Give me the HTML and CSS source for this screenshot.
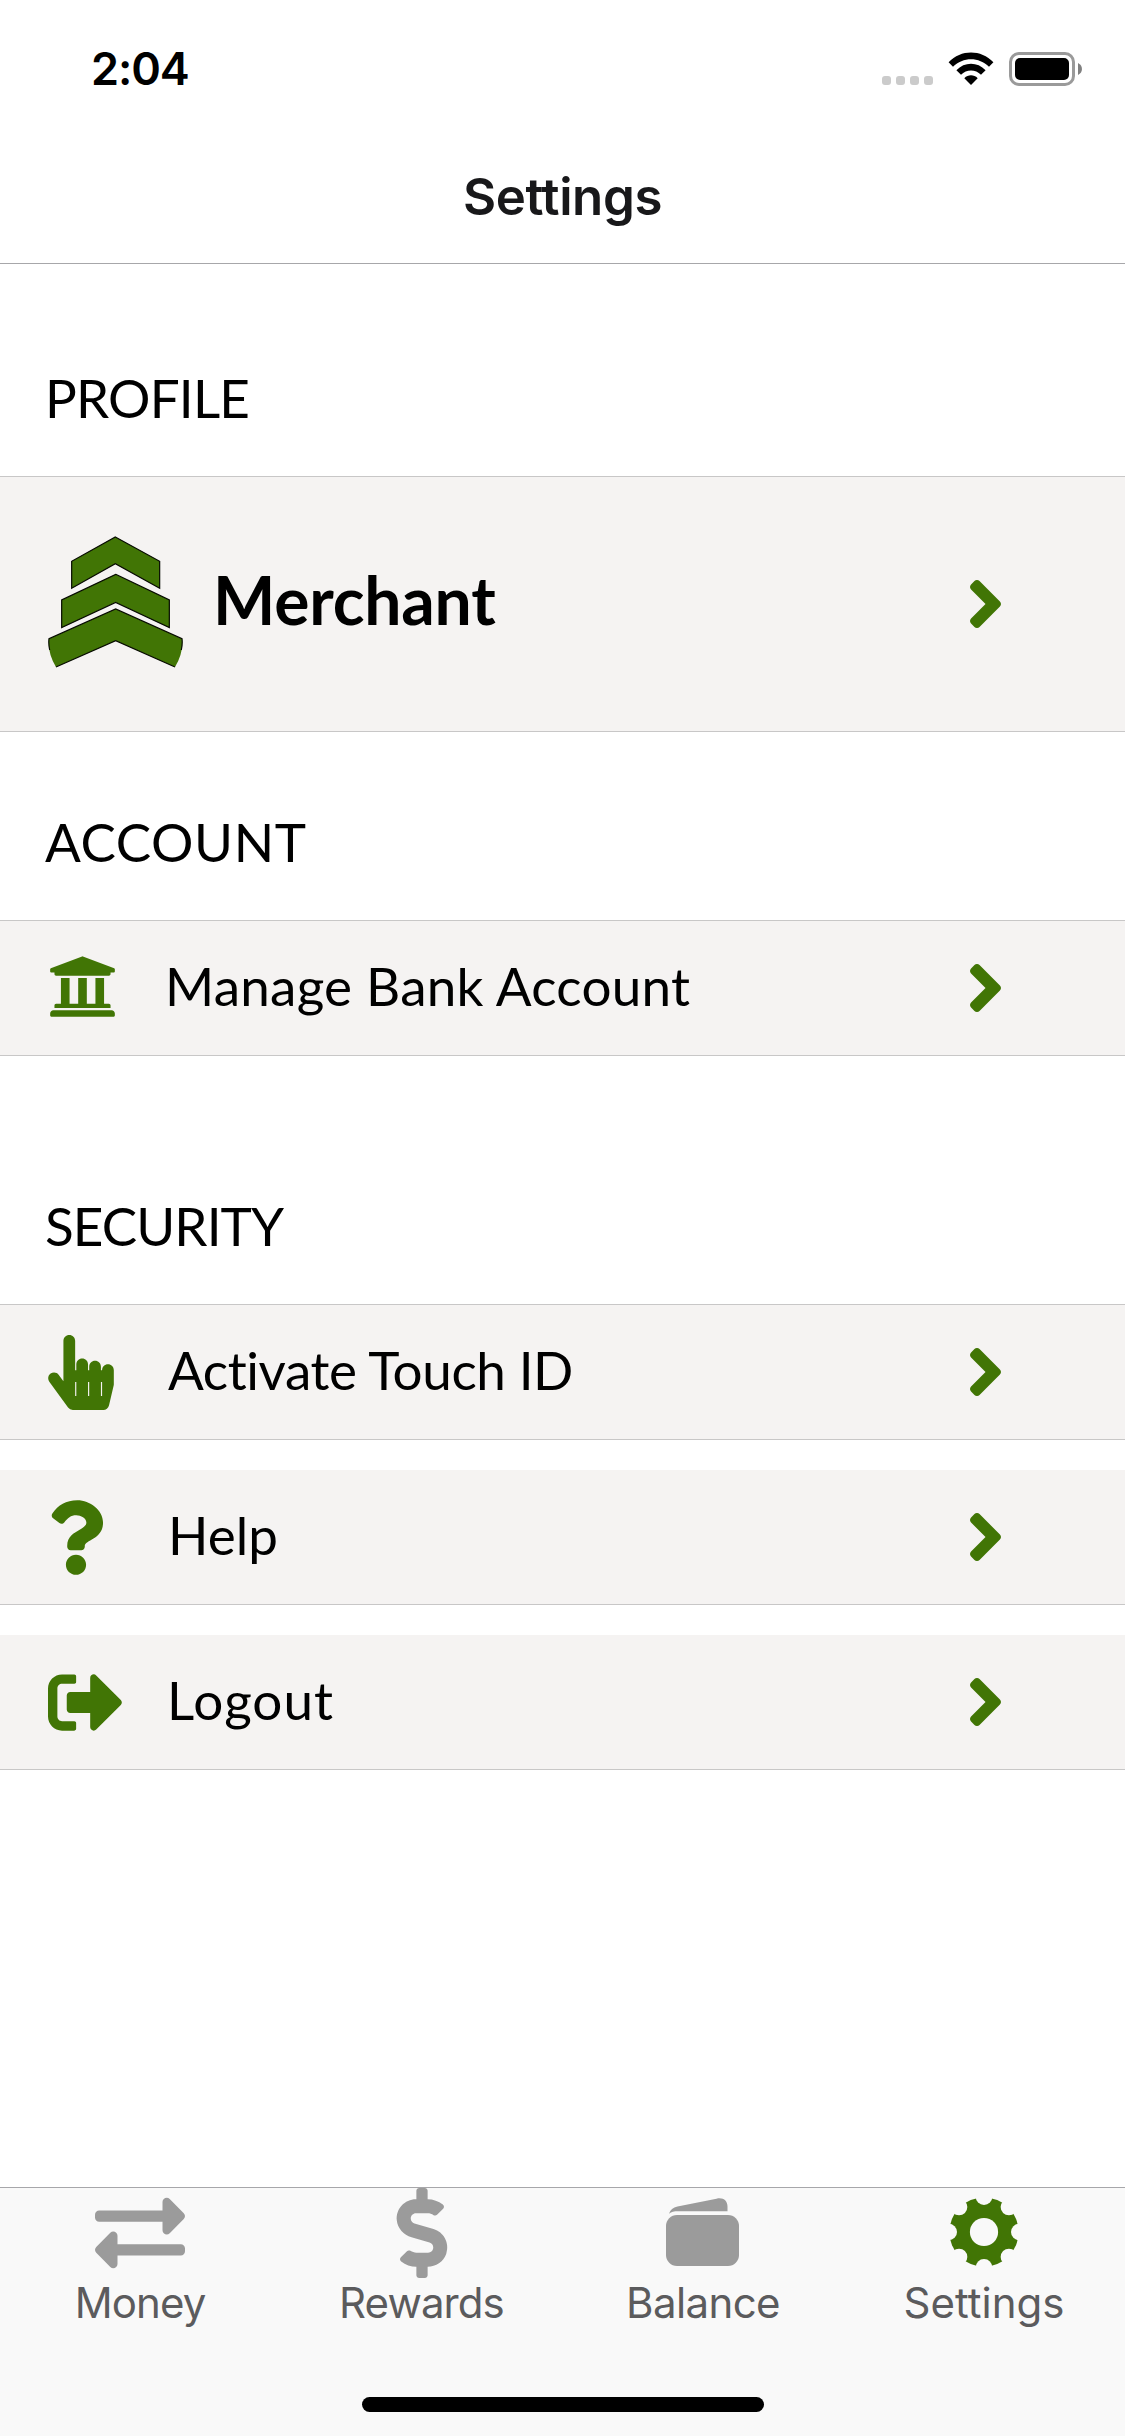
FILE: index.html
```html
<!DOCTYPE html>
<html lang="en">
<head>
<meta charset="utf-8">
<title>Settings</title>
<link rel="stylesheet" href="styles.css">
</head>
<body>
<svg class="defs" width="0" height="0" aria-hidden="true">
  <symbol id="chevron" viewBox="24.7 96 206.7 320"><path d="M224.3 273l-136 136c-9.4 9.400-24.600 9.400-33.900 0l-22.600-22.600c-9.400-9.400-9.400-24.600 0-33.900l96.400-96.400-96.400-96.400c-9.400-9.400-9.400-24.600 0-33.900L54.300 103c9.400-9.400 24.600-9.400 33.900 0l136 136c9.500 9.400 9.500 24.600.1 34z"/></symbol>
</svg>
<div class="screen">
  <header class="status">
    <span class="time">2:04</span>
    <div class="indicators">
      <div class="signal"><i></i><i></i><i></i><i></i></div>
      <svg class="wifi" viewBox="0 0 46 33">
        <path d="M0.600 10.200C13-2.800 33-2.800 45.400 10.200L41 14.800C31 4.700 15 4.700 5 14.800Z"/>
        <path d="M8.400 18.200C16.500 9.600 29.500 9.600 37.600 18.200L33 22.800C27.500 17 18.500 17 13 22.800Z"/>
        <path d="M16.300 26.200C20.200 22.400 25.800 22.400 29.700 26.200L23 33Z"/>
      </svg>
      <div class="battery"><div class="cell"><div class="charge"></div></div><svg class="nub" viewBox="0 0 4 12"><path d="M0 0C5.300 2.500 5.300 9.500 0 12Z"/></svg></div>
    </div>
  </header>
  <div class="navbar"><h1 class="title">Settings</h1></div>

  <main class="content">
    <section class="section profile">
      <h2 class="heading heading-profile">PROFILE</h2>
      <div class="row row-large">
        <svg class="logo" viewBox="54 42 405 405">
          <path d="M256 51L389 124V205L256 131L125 205V124Z"/>
          <path d="M257 163L418 240V323L257 247L95 323V240Z"/>
          <path class="base" d="M257 267L456 356Q461 398 435 441L257 362L78 441Q52 398 57 356Z"/>
          <path class="edge" d="M59 390Q55 370 57 356L257 267L456 356Q458 370 454 390M78 441L257 362L435 441"/>
        </svg>
        <span class="label merchant">Merchant</span>
        <svg class="chevron"><use href="#chevron"/></svg>
      </div>
    </section>

    <section class="section account">
      <h2 class="heading heading-account">ACCOUNT</h2>
      <div class="row">
        <svg class="icon bank" viewBox="0 0 512 512"><path d="M496 128v16a8 8 0 0 1-8 8h-24v12c0 6.627-5.373 12-12 12H60c-6.627 0-12-5.373-12-12v-12H24a8 8 0 0 1-8-8v-16a8 8 0 0 1 4.941-7.392l232-88a7.996 7.996 0 0 1 6.118 0l232 88A8 8 0 0 1 496 128zm-24 304H40c-13.255 0-24 10.745-24 24v16a8 8 0 0 0 8 8h464a8 8 0 0 0 8-8v-16c0-13.255-10.745-24-24-24zM96 192v192H60c-6.627 0-12 5.373-12 12v20h416v-20c0-6.627-5.373-12-12-12h-36V192h-64v192h-64V192h-64v192h-64V192H96z"/></svg>
        <span class="label manage">Manage Bank Account</span>
        <svg class="chevron"><use href="#chevron"/></svg>
      </div>
    </section>

    <section class="section security">
      <h2 class="heading heading-security">SECURITY</h2>
      <div class="rows">
        <div class="row">
          <svg class="icon hand" viewBox="0 0 448 512"><path d="M448 240v96c0 3.084-.356 6.159-1.063 9.162l-32 136C410.686 499.230 394.562 512 376 512H168a40.004 40.004 0 0 1-32.350-16.473l-127.997-176c-12.993-17.866-9.043-42.883 8.822-55.876 17.867-12.994 42.884-9.043 55.877 8.823L104 315.992V40c0-22.091 17.908-40 40-40s40 17.909 40 40v200h8v-40c0-22.091 17.908-40 40-40s40 17.909 40 40v40h8v-24c0-22.091 17.908-40 40-40s40 17.909 40 40v24h8c0-22.091 17.908-40 40-40s40 17.909 40 40zm-256 80h-8v96h8v-96zm88 0h-8v96h8v-96zm88 0h-8v96h8v-96z"/></svg>
          <span class="label touch">Activate Touch ID</span>
          <svg class="chevron"><use href="#chevron"/></svg>
        </div>
        <div class="row row-open">
          <svg class="icon question" viewBox="0 0 384 512"><path d="M202.021 0C122.202 0 70.503 32.703 29.914 91.026c-7.363 10.580-5.093 25.086 5.178 32.874l43.138 32.709c10.373 7.865 25.132 6.026 33.253-4.148 25.049-31.381 43.630-49.449 82.757-49.449 30.764 0 68.816 19.799 68.816 49.631 0 22.552-18.617 34.134-48.993 51.164-35.423 19.860-82.299 44.576-82.299 106.405V320c0 13.255 10.745 24 24 24h72.471c13.255 0 24-10.745 24-24v-5.773c0-42.860 125.268-44.645 125.268-160.627C377.504 66.256 286.902 0 202.021 0zM192 373.459c-38.196 0-69.271 31.075-69.271 69.271 0 38.195 31.075 69.270 69.271 69.270s69.271-31.075 69.271-69.271-31.075-69.270-69.271-69.270z"/></svg>
          <span class="label help">Help</span>
          <svg class="chevron"><use href="#chevron"/></svg>
        </div>
        <div class="row row-open">
          <svg class="icon exit" viewBox="0 0 512 512"><path d="M497 273L329 441c-15 15-41 4.500-41-17v-96H152c-13.300 0-24-10.700-24-24v-96c0-13.300 10.700-24 24-24h136V88c0-21.400 25.900-32 41-17l168 168c9.300 9.400 9.300 24.600 0 34zM192 436v-40c0-6.600-5.400-12-12-12H96c-17.700 0-32-14.300-32-32V160c0-17.700 14.300-32 32-32h84c6.600 0 12-5.400 12-12V76c0-6.600-5.400-12-12-12H96c-53 0-96 43-96 96v192c0 53 43 96 96 96h84c6.600 0 12-5.400 12-12z"/></svg>
          <span class="label logout">Logout</span>
          <svg class="chevron"><use href="#chevron"/></svg>
        </div>
      </div>
    </section>
  </main>

  <footer class="dock">
    <nav class="tabs">
      <div class="tab">
        <svg class="tab-icon" viewBox="0 0 512 512"><path d="M0 168v-16c0-13.255 10.745-24 24-24h360V80c0-21.367 25.899-32.042 40.971-16.971l80 80c9.372 9.373 9.372 24.569 0 33.941l-80 80C409.956 271.982 384 261.456 384 240v-48H24c-13.255 0-24-10.745-24-24zm488 152H128v-48c0-21.314-25.862-32.080-40.971-16.971l-80 80c-9.372 9.373-9.372 24.569 0 33.941l80 80C102.057 463.997 128 453.437 128 432v-48h360c13.255 0 24-10.745 24-24v-16c0-13.255-10.745-24-24-24z"/></svg>
        <span class="tab-label tight">Money</span>
      </div>
      <div class="tab">
        <svg class="tab-icon" viewBox="-112 0 512 512"><path d="M209.200 233.400l-108-31.600C88.700 198.200 80 186.500 80 173.500c0-16.300 13.200-29.500 29.500-29.500h66.300c12.200 0 24.200 3.700 34.200 10.500 6.100 4.100 14.300 3.100 19.500-2l34.800-34c7.100-6.900 6.100-18.400-1.800-24.500C238 74.800 207.400 64.100 176 64V16c0-8.800-7.200-16-16-16h-32c-8.800 0-16 7.200-16 16v48h-2.500C45.800 64-5.400 118.700.5 183.600c4.200 46.100 39.400 83.600 83.800 96.600l102.500 30c12.500 3.700 21.200 15.300 21.200 28.300 0 16.300-13.200 29.500-29.500 29.500h-66.300C100 368 88 364.300 78 357.500c-6.100-4.100-14.300-3.100-19.500 2l-34.800 34c-7.100 6.900-6.100 18.400 1.800 24.500 24.500 19.200 55.100 29.900 86.500 30v48c0 8.800 7.200 16 16 16h32c8.800 0 16-7.200 16-16v-48.200c46.600-.9 90.300-28.600 105.700-72.700 21.500-61.600-14.600-124.800-72.500-141.700z"/></svg>
        <span class="tab-label tight">Rewards</span>
      </div>
      <div class="tab">
        <svg class="tab-icon" viewBox="0 0 90 90"><rect x="8" y="27" width="73" height="51" rx="11"/><path d="M11 25.800C12.500 21.500 15 19.400 19.500 18.400L58.500 10.700C65.500 9.200 69.500 13 69.500 18.500V23.300H20C16 23.300 13.500 23.800 11 25.800Z"/></svg>
        <span class="tab-label snug">Balance</span>
      </div>
      <div class="tab">
        <svg class="tab-icon active" viewBox="-45 -44 90 90">
          <mask id="teeth" maskUnits="userSpaceOnUse" x="-45" y="-45" width="90" height="90">
            <circle r="34.6" fill="#fff"/>
            <g fill="#000">
              <circle r="14.1"/>
              <circle cx="35.300" r="8.300"/><circle cx="-35.300" r="8.300"/><circle cy="35.300" r="8.300"/><circle cy="-35.300" r="8.300"/>
              <circle cx="24.960" cy="24.960" r="8.300"/><circle cx="-24.960" cy="24.960" r="8.300"/><circle cx="24.960" cy="-24.960" r="8.300"/><circle cx="-24.960" cy="-24.960" r="8.300"/>
            </g>
          </mask>
          <circle r="36" mask="url(#teeth)"/>
        </svg>
        <span class="tab-label">Settings</span>
      </div>
    </nav>
    <div class="home"></div>
  </footer>
</div>
</body>
</html>
```
FILE: styles.css
```css
* { box-sizing: border-box; }
body { margin: 0; background: #fff; color: #000; }
h1, h2 { margin: 0; font-weight: 400; }
svg { display: block; flex: none; }
.defs { display: none; }

.screen { width: 1125px; height: 2436px; display: flex; flex-direction: column; font-family: Lato, sans-serif; font-variant-ligatures: none; overflow: hidden; }

.status { height: 132px; padding: 42px 43px 0 91px; display: flex; justify-content: space-between; align-items: flex-start; }
.time { font: 600 45px/54px Inter, sans-serif; letter-spacing: -1.1px; }
.indicators { display: flex; align-items: flex-start; padding-top: 10px; }
.signal { display: flex; gap: 5px; margin: 24px 15px 0 0; }
.signal i { width: 9px; height: 9px; border-radius: 3px; background: #cbcbcb; }
.wifi { width: 46px; height: 33px; margin-right: 15px; }
.battery { display: flex; align-items: center; gap: 3px; }
.cell { width: 66px; height: 34px; border: 3px solid #9a9a9a; border-radius: 10px; padding: 3px; }
.charge { height: 22px; border-radius: 5px; background: #000; }
.nub { width: 4px; height: 12px; fill: #808080; }

.navbar { height: 132px; padding-bottom: 1px; border-bottom: 1px solid #a7a7aa; display: flex; align-items: center; justify-content: center; }
.title { font: 600 51px/64px Inter, sans-serif; letter-spacing: -0.4px; color: #18181a; }

.content { flex: 1; }
.heading { padding: 2px 0 0 45px; margin-bottom: 46px; font-size: 53px; line-height: 64px; white-space: nowrap; }
.heading-profile { letter-spacing: -0.8px; }
.heading-account { letter-spacing: 0.6px; }
.heading-security { letter-spacing: -0.9px; }
.profile { padding-top: 100px; }
.account { padding-top: 76px; }
.security { padding-top: 136px; }
.rows { display: flex; flex-direction: column; gap: 30px; }
.row { height: 136px; padding: 0 124px 0 48px; display: flex; align-items: center; background: #f5f3f2; border: solid #c8c7c7; border-width: 1px 0; }
.row-open { height: 135px; border-top-width: 0; }
.row-large { height: 256px; }
.icon, .logo, .chevron { fill: #417505; }
.label { flex: 1; padding-bottom: 5px; font-size: 53px; line-height: 64px; white-space: nowrap; }
.chevron { width: 31px; height: 48px; }

.logo { width: 135px; height: 135px; margin: 0 30px 5px 0; stroke: #060a00; stroke-width: 3.6; }
.logo .base { stroke: none; }
.logo .edge { fill: none; }
.merchant { font-size: 66px; font-weight: 700; line-height: 78px; padding-bottom: 9px; letter-spacing: -0.2px; }
.manage { letter-spacing: 0.25px; }
.touch { letter-spacing: -0.4px; }
.logout { letter-spacing: 1px; }
.bank { width: 69px; height: 69px; margin: 0 48px 3px 0; }
.hand { width: 66px; height: 75px; margin-right: 54px; }
.question { width: 56px; height: 75px; margin-right: 64px; }
.exit { width: 75px; height: 75px; margin-right: 44px; }

.dock { height: 249px; border-top: 1px solid #a7a7aa; background: #f9f9f9; display: flex; flex-direction: column; justify-content: space-between; align-items: center; padding-bottom: 24px; }
.tabs { width: 100%; display: grid; grid-template-columns: 280px 283px 280px 282px; }
.tab { display: flex; flex-direction: column; align-items: center; }
.tab-icon { width: 90px; height: 90px; fill: #9b9b9b; }
.tab-icon.active { fill: #417505; }
.tab-label { font: 400 42px/50px Inter, sans-serif; color: #5b5b5d; }
.tight { letter-spacing: -0.9px; }
.snug { letter-spacing: -0.6px; }
.home { width: 402px; height: 15px; border-radius: 8px; background: #000; }
```
